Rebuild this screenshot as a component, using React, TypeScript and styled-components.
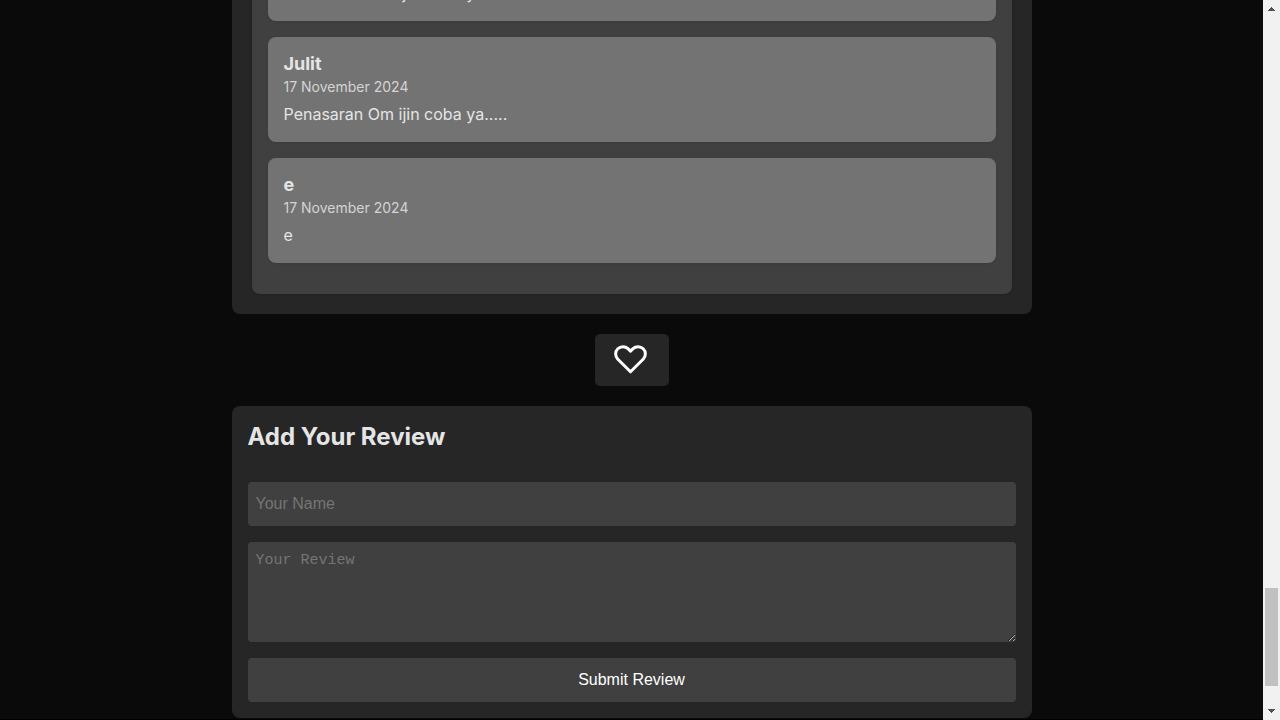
import React from "react";
import styled, { createGlobalStyle } from "styled-components";

const GlobalStyle = createGlobalStyle`
  * { box-sizing: border-box; }
  body {
    margin: 0;
    background: #0a0a0a;
    color: #e5e5e5;
    font-family: Inter, "Liberation Sans", sans-serif;
    font-size: 16px;
  }
  h2, h3, p { margin: 0; }
`;

const Window = styled.div`
  display: flex;
  height: 100vh;
  overflow: hidden;
`;

const Page = styled.div`
  flex: 1;
  min-width: 0;
  display: flex;
  flex-direction: column;
  justify-content: flex-end;
`;

const Content = styled.main`
  flex: none;
  width: 100%;
  max-width: 800px;
  margin: 0 auto;
  padding-bottom: 1px;
  display: flex;
  flex-direction: column;
  align-items: center;
  gap: 20px;
`;

const Detail = styled.section`
  width: 100%;
  padding: 20px;
  border-radius: 8px;
  background: #262626;
`;

const ReviewList = styled.div`
  display: flex;
  flex-direction: column;
  gap: 16px;
  padding: 16px 16px 31px;
  border-radius: 8px;
  background: #404040;
  box-shadow: 0 1px 3px rgba(0, 0, 0, 0.1);
`;

const ReviewCard = styled.article`
  padding: 16px;
  border-radius: 8px;
  background: #737373;
  box-shadow: 0 1px 3px rgba(0, 0, 0, 0.1);
`;

const ReviewName = styled.h3`
  font-size: 18px;
  line-height: 22px;
  font-weight: 700;
`;

const ReviewDate = styled.p`
  padding: 3px 0 6px;
  font-size: 14px;
  line-height: 17px;
  color: #d4d4d4;
`;

const ReviewText = styled.p`
  padding: 3px 0 2px;
  line-height: 20px;
`;

const LikeButton = styled.button`
  display: flex;
  align-items: center;
  justify-content: center;
  width: 74px;
  height: 52px;
  padding: 0 3px 2px 0;
  border: 0;
  border-radius: 5px;
  background: #262626;
  color: #fff;
`;

const Form = styled.form`
  width: 100%;
  padding: 16px;
  border-radius: 8px;
  background: #262626;
  display: flex;
  flex-direction: column;
  gap: 16px;
`;

const FormTitle = styled.h2`
  padding-bottom: 14px;
  font-size: 24px;
  line-height: 30px;
  font-weight: 700;
`;

const NameInput = styled.input`
  height: 44px;
  padding: 8px;
  border: 0;
  border-radius: 4px;
  background: #404040;
  color: #e5e5e5;
  font: 16px "Liberation Sans", Arial, sans-serif;
  &::placeholder { color: #757575; }
`;

const ReviewInput = styled.textarea`
  height: 100px;
  padding: 8px;
  border: 0;
  border-radius: 4px;
  background: #404040;
  color: #e5e5e5;
  font: 15px/22px "Liberation Mono", monospace;
  resize: vertical;
  &::placeholder { color: #757575; }
`;

const SubmitButton = styled.button`
  height: 44px;
  border: 0;
  border-radius: 4px;
  background: #404040;
  color: #fff;
  font: 16px "Liberation Sans", Arial, sans-serif;
`;

const Footer = styled.footer`
  flex: none;
  height: 1px;
  background: #000;
`;

const ScrollBar = styled.div`
  width: 17px;
  display: flex;
  flex-direction: column;
  align-items: center;
  justify-content: space-between;
  padding: 7px 0;
  background: #f1f1f1;
`;

const Track = styled.div`
  flex: 1;
  width: 13px;
  display: flex;
  flex-direction: column;
  justify-content: flex-end;
  padding-bottom: 23px;
`;

const Thumb = styled.div`
  height: 98px;
  background: #c1c1c1;
`;

const Arrow = styled.svg`
  display: block;
  width: 7px;
  height: 4px;
  fill: #505050;
`;

const reviews = [
  { name: "Julit", date: "17 November 2024", text: "Penasaran Om ijin coba ya....." },
  { name: "Julit", date: "17 November 2024", text: "Penasaran Om ijin coba ya....." },
  { name: "e", date: "17 November 2024", text: "e" },
];

export default function App() {
  return (
    <>
      <GlobalStyle />
      <Window>
        <Page>
          <Content>
            <Detail>
              <ReviewList>
                {reviews.map((review, index) => (
                  <ReviewCard key={index}>
                    <ReviewName>{review.name}</ReviewName>
                    <ReviewDate>{review.date}</ReviewDate>
                    <ReviewText>{review.text}</ReviewText>
                  </ReviewCard>
                ))}
              </ReviewList>
            </Detail>
            <LikeButton type="button" aria-label="Like this restaurant">
              <svg width="33" height="29" viewBox="0 0 33 29" fill="none" stroke="currentColor" strokeWidth="3">
                <path
                  d="M16.5 26.8 L3.64 13.96 A7.3 7.3 0 0 1 13.96 3.64 L16.5 6.18 L19.04 3.64 A7.3 7.3 0 0 1 29.36 13.96 Z"
                  strokeLinejoin="round"
                />
              </svg>
            </LikeButton>
            <Form onSubmit={(event) => event.preventDefault()}>
              <FormTitle>Add Your Review</FormTitle>
              <NameInput type="text" placeholder="Your Name" aria-label="Your Name" />
              <ReviewInput placeholder="Your Review" aria-label="Your Review" />
              <SubmitButton type="submit">Submit Review</SubmitButton>
            </Form>
          </Content>
          <Footer />
        </Page>
        <ScrollBar aria-hidden="true">
          <Arrow viewBox="0 0 7 4" shapeRendering="crispEdges"><path d="M3 0h1v1h1v1h1v1h1v1H0V3h1V2h1V1h1z" /></Arrow>
          <Track><Thumb /></Track>
          <Arrow viewBox="0 0 7 4" shapeRendering="crispEdges"><path d="M0 0h7v1H6v1H5v1H4v1H3V3H2V2H1V1H0z" /></Arrow>
        </ScrollBar>
      </Window>
    </>
  );
}
